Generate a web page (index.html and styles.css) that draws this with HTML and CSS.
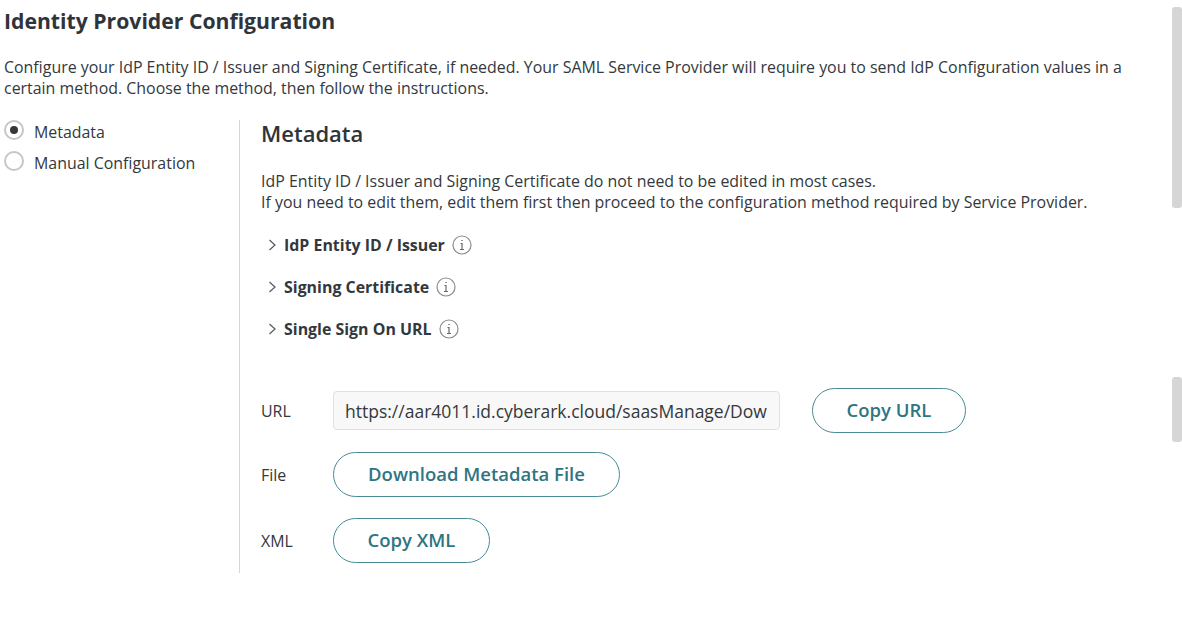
FILE: index.html
```html
<!DOCTYPE html>
<html lang="en">
<head>
  <meta charset="UTF-8">
  <title>Identity Provider Configuration</title>
  <link rel="stylesheet" href="styles.css">
</head>
<body>
  <div class="page">
    <h1>Identity Provider Configuration</h1>
    <p class="intro">Configure your IdP Entity ID / Issuer and Signing Certificate, if needed. Your SAML Service Provider will require you to send IdP Configuration values in a certain method. Choose the method, then follow the instructions.</p>
    <div class="columns">
      <div class="methods">
        <div class="method"><span class="radio checked"></span>Metadata</div>
        <div class="method"><span class="radio"></span>Manual Configuration</div>
      </div>
      <div class="panel">
        <h2>Metadata</h2>
        <p class="note">IdP Entity ID / Issuer and Signing Certificate do not need to be edited in most cases.<br>If you need to edit them, edit them first then proceed to the configuration method required by Service Provider.</p>
        <div class="sections">
          <div class="section">
            <svg class="chevron" width="9" height="12" viewBox="0 0 9 12"><path d="M1.5 1 7 6l-5.500 5" /></svg>
            <span>IdP Entity ID / Issuer</span>
            <svg class="info" width="20" height="20" viewBox="0 0 20 20"><circle cx="10" cy="10" r="9" /><path class="info-mark" d="M9.300 5.500h1.400M8.500 8.500H10v6M8 14.500h4" /></svg>
          </div>
          <div class="section">
            <svg class="chevron" width="9" height="12" viewBox="0 0 9 12"><path d="M1.5 1 7 6l-5.500 5" /></svg>
            <span>Signing Certificate</span>
            <svg class="info" width="20" height="20" viewBox="0 0 20 20"><circle cx="10" cy="10" r="9" /><path class="info-mark" d="M9.300 5.500h1.400M8.500 8.500H10v6M8 14.500h4" /></svg>
          </div>
          <div class="section">
            <svg class="chevron" width="9" height="12" viewBox="0 0 9 12"><path d="M1.5 1 7 6l-5.500 5" /></svg>
            <span>Single Sign On URL</span>
            <svg class="info" width="20" height="20" viewBox="0 0 20 20"><circle cx="10" cy="10" r="9" /><path class="info-mark" d="M9.300 5.500h1.400M8.500 8.500H10v6M8 14.500h4" /></svg>
          </div>
        </div>
        <div class="fields">
          <div class="field">
            <label>URL</label>
            <div class="url-box">
              <input class="url" type="text" value="https://aar4011.id.cyberark.cloud/saasManage/DownloadSAMLMetadataForApp" readonly>
            </div>
            <button class="btn copy-url">Copy URL</button>
          </div>
          <div class="field field-file">
            <label>File</label>
            <button class="btn download">Download Metadata File</button>
          </div>
          <div class="field field-xml">
            <label>XML</label>
            <button class="btn copy-xml">Copy XML</button>
          </div>
        </div>
      </div>
    </div>
  </div>
  <div class="scroll-thumb thumb-one"></div>
  <div class="scroll-thumb thumb-two"></div>
</body>
</html>
```

FILE: styles.css
```css
html, body {
  height: 100%;
}
body {
  font-family: "Open Sans", Arial, sans-serif;
  margin: 0;
  padding: 0;
  color: #33383d;
  background: #fff;
  overflow: hidden;
}
.page {
  padding: 7px 50px 0 4px;
}
h1 {
  font-size: 21.2px;
  line-height: 28px;
  font-weight: 700;
  margin: 0 0 22px;
  color: #2f343a;
}
.intro {
  font-size: 15.93px;
  line-height: 21px;
  margin: 0 0 21px;
}
.columns {
  display: flex;
}
.methods {
  width: 235px;
  flex-shrink: 0;
  font-size: 15.93px;
  margin-top: -4px;
}
.method {
  display: flex;
  align-items: center;
  gap: 10px;
  height: 31px;
}
.radio {
  width: 20px;
  height: 20px;
  box-sizing: border-box;
  border: 2px solid #c6c6c6;
  border-radius: 50%;
  background: #fff;
  margin-top: -3px;
  position: relative;
}
.radio.checked::after {
  content: "";
  position: absolute;
  left: 4px;
  top: 4px;
  width: 8px;
  height: 8px;
  border-radius: 50%;
  background: #33383d;
}
.panel {
  border-left: 1px solid #d6d6d6;
  padding-left: 21px;
  height: 453px;
  flex: 1;
}
h2 {
  font-size: 22px;
  line-height: 26px;
  font-weight: 600;
  margin: 0 0 25px;
  color: #2f343a;
}
.note {
  font-size: 15.93px;
  line-height: 21px;
  margin: 0 0 11px;
}
.sections {
  margin-bottom: 38px;
}
.section {
  display: flex;
  align-items: center;
  height: 42px;
  font-size: 15.93px;
  font-weight: 700;
  padding-left: 7px;
}
.chevron {
  margin-right: 7px;
  fill: none;
  stroke: #55595e;
  stroke-width: 1.2;
}
.info {
  margin-left: 7px;
  fill: none;
  stroke: #8a8c8e;
  stroke-width: 1.2;
}
.info-mark {
  stroke: #66696c;
}
.fields {
  display: flex;
  flex-direction: column;
  gap: 20px;
}
.field {
  display: flex;
  align-items: center;
  height: 45px;
}
.field-file {
  margin-top: -1px;
}
.field-xml {
  margin-top: 1px;
}
.field label {
  width: 72px;
  font-size: 15.93px;
}
.url-box {
  width: 447px;
  height: 39px;
  box-sizing: border-box;
  border: 1px solid #e0e0e0;
  border-radius: 4px;
  background: #f8f8f8;
  padding: 0 11px;
}
.url {
  display: block;
  width: 100%;
  height: 100%;
  box-sizing: border-box;
  border: none;
  background: transparent;
  padding: 0;
  font-family: inherit;
  font-size: 17.5px;
  color: #33383d;
  outline: none;
  clip-path: inset(0);
}
.btn {
  height: 45px;
  box-sizing: border-box;
  border: 1.5px solid #4a8b97;
  border-radius: 23px;
  background: #fff;
  color: #2f7582;
  font-family: inherit;
  font-size: 18.5px;
  font-weight: 600;
  padding: 0 0 2px;
  cursor: pointer;
}
.copy-url {
  width: 154px;
  margin-left: 32px;
}
.download {
  width: 287px;
}
.copy-xml {
  width: 157px;
}
.scroll-thumb {
  position: absolute;
  right: 0;
  width: 10px;
  background: #d6d6d6;
  border-radius: 3px;
}
.thumb-one {
  top: 7px;
  height: 201px;
}
.thumb-two {
  top: 377px;
  height: 65px;
}
```
